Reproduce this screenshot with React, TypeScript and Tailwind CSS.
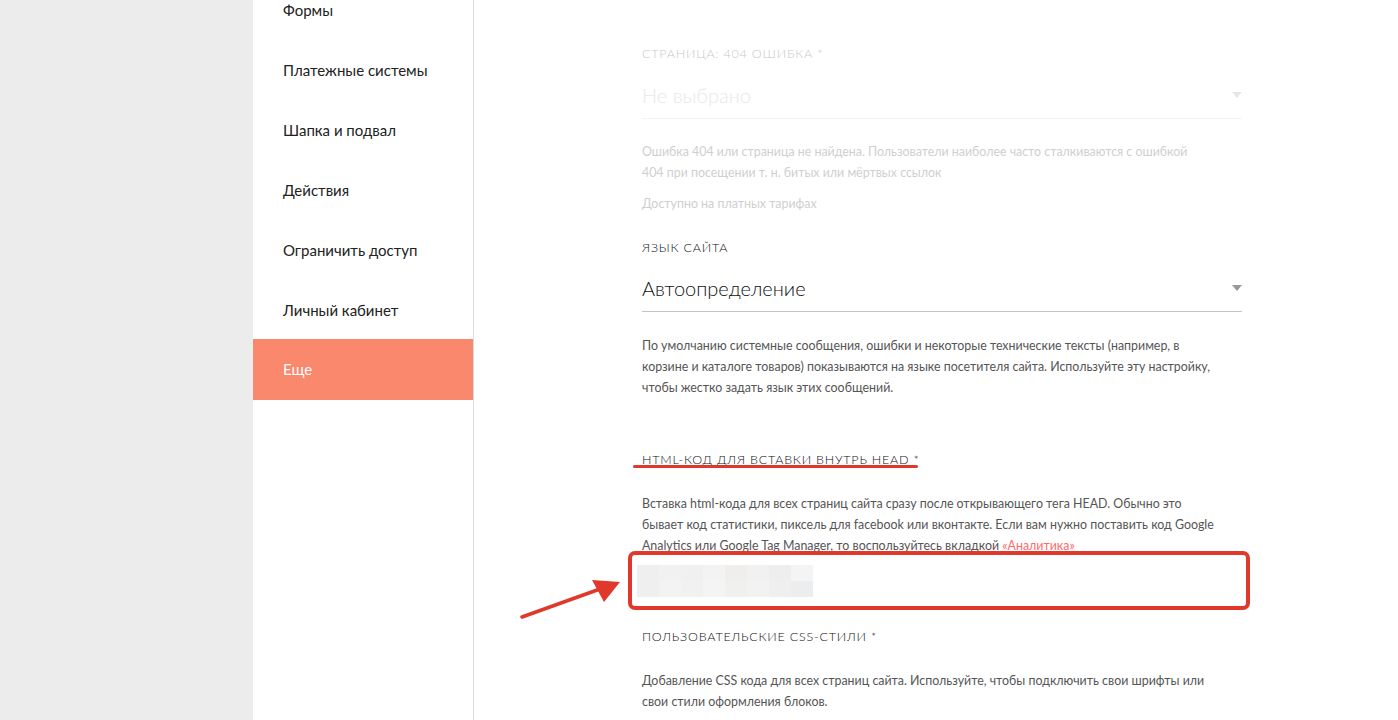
const menu = [
  "Формы",
  "Платежные системы",
  "Шапка и подвал",
  "Действия",
  "Ограничить доступ",
  "Личный кабинет",
  "Еще",
];

function Caret({ light }: { light?: boolean }) {
  return (
    <svg width="10" height="6" viewBox="0 0 10 6" className="shrink-0">
      <path d="M0 0h10L5 6z" fill={light ? "#e6e6e6" : "#999"} />
    </svg>
  );
}

function Label({ children, className = "" }: { children: React.ReactNode; className?: string }) {
  return (
    <div className={`text-[12.5px] font-light uppercase tracking-[0.8px] leading-[16px] ${className}`}>
      {children}
    </div>
  );
}

function Lines({ lines, className = "" }: { lines: React.ReactNode[]; className?: string }) {
  return (
    <p className={`whitespace-nowrap text-[12.4px] leading-[21px] ${className}`}>
      {lines.map((l, i) => (
        <span key={i} className="block">
          {l}
        </span>
      ))}
    </p>
  );
}

export default function App() {
  return (
    <div className="flex h-[720px] overflow-hidden bg-white font-['Lato','Noto_Sans',sans-serif]">
      <div className="w-[253px] shrink-0 bg-[#ececec]" />

      <aside className="w-[221px] shrink-0 border-r border-[#dcdcdc] bg-white">
        <ul className="-mt-[20px]">
          {menu.map((item) => (
            <li
              key={item}
              className={`flex h-[60px] items-center pl-[30px] text-[15px] ${
                item === "Еще" ? "-mt-px h-[61px] bg-[#f9886c] text-white" : "text-[#222]"
              }`}
            >
              {item}
            </li>
          ))}
        </ul>
      </aside>

      <main className="relative flex-1">
        <div className="ml-[168px] w-[600px] pt-[46px]">
          {/* disabled section */}
          <Label className="text-[#c8c8c8]">Страница: 404 ошибка *</Label>
          <div className="mt-[19px] flex items-center justify-between border-b border-[#f2f2f2] pb-[9px]">
            <span className="text-[20px] font-light leading-[28px] text-[#e8e8e8]">Не выбрано</span>
            <Caret light />
          </div>
          <Lines
            className="mt-[22px] text-[#cfcfcf]"
            lines={[
              "Ошибка 404 или страница не найдена. Пользователи наиболее часто сталкиваются с ошибкой",
              "404 при посещении т. н. битых или мёртвых ссылок",
            ]}
          />
          <p className="mt-[10px] text-[12.4px] leading-[21px] text-[#cfcfcf]">Доступно на платных тарифах</p>

          <Label className="mt-[26px] text-[#111]">Язык сайта</Label>
          <div className="mt-[18px] flex items-center justify-between border-b border-[#c4c4c4] pb-[9px]">
            <span className="text-[20px] font-light leading-[28px] text-[#111]">Автоопределение</span>
            <Caret />
          </div>
          <Lines
            className="mt-[23px] text-[#555]"
            lines={[
              "По умолчанию системные сообщения, ошибки и некоторые технические тексты (например, в",
              "корзине и каталоге товаров) показываются на языке посетителя сайта. Используйте эту настройку,",
              "чтобы жестко задать язык этих сообщений.",
            ]}
          />

          <Label className="mt-[54px] text-[#111]">HTML-код для вставки внутрь HEAD *</Label>
          <Lines
            className="mt-[25px] text-[#555]"
            lines={[
              "Вставка html-кода для всех страниц сайта сразу после открывающего тега HEAD. Обычно это",
              "бывает код статистики, пиксель для facebook или вконтакте. Если вам нужно поставить код Google",
              <>
                Analytics или Google Tag Manager, то воспользуйтесь вкладкой{" "}
                <span className="text-[#ff6b6b]">«Аналитика»</span>
              </>,
            ]}
          />
          <div className="mt-[9px] h-[60px]">
            <div className="-ml-[5px] mt-[1px] grid h-[32px] w-[176px] grid-cols-8 grid-rows-2">
              {[
                "#efefef", "#f1f1f1", "#f0f0f0", "#f3f3f3", "#efeeed", "#f1f1f1", "#eeeeee", "#f4f4f4",
                "#efefef", "#f3f3f3", "#f1f1f1", "#f4f4f4", "#f0f0ef", "#f2f2f2", "#efefef", "#ecedef",
              ].map((c, i) => (
                <div key={i} style={{ background: c }} />
              ))}
            </div>
          </div>

          <Label className="mt-[4px] text-[#111]">Пользовательские CSS-стили *</Label>
          <Lines
            className="mt-[25px] text-[#555]"
            lines={[
              "Добавление CSS кода для всех страниц сайта. Используйте, чтобы подключить свои шрифты или",
              "свои стили оформления блоков.",
            ]}
          />
        </div>

        {/* annotations */}
        <div className="absolute left-[159px] top-[465px] h-[3px] w-[285px] rounded-full bg-[#e0392b]" />
        <div className="absolute left-[154px] top-[551px] h-[59px] w-[622px] rounded-[7px] border-[4px] border-[#e0392b]" />
        <svg className="absolute left-[46px] top-[578px]" width="104" height="42" viewBox="0 0 104 42">
          <path d="M2 39L80 11" stroke="#e0392b" strokeWidth="3.5" strokeLinecap="round" />
          <path d="M100 4L72 2L84 24Z" fill="#e0392b" />
        </svg>
      </main>
    </div>
  );
}
